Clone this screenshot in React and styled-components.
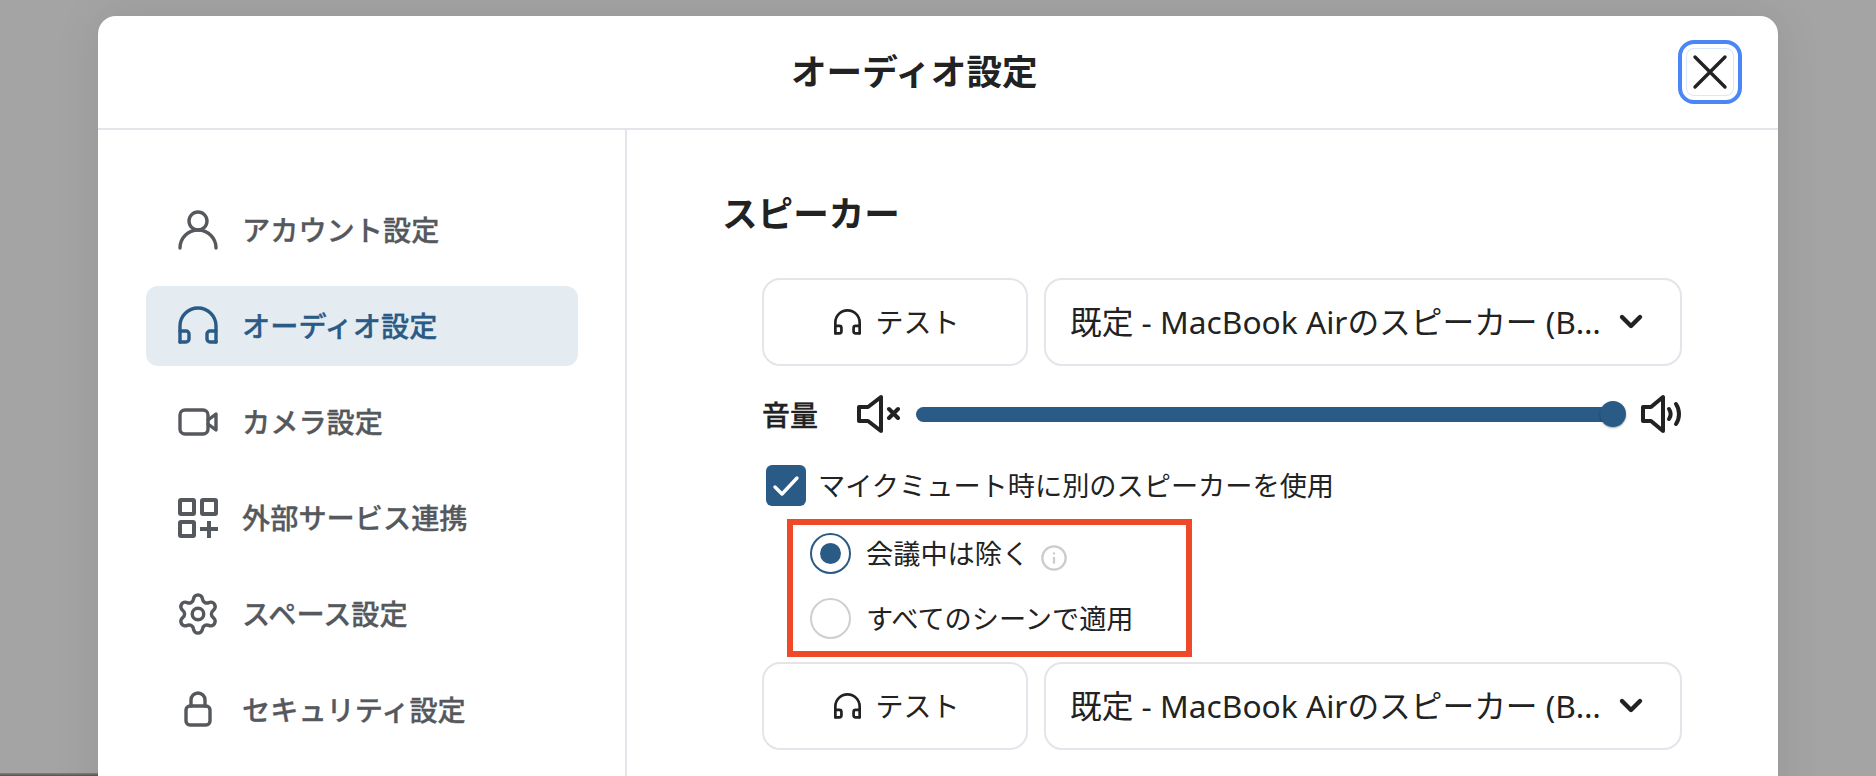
import React from 'react';
import styled, { createGlobalStyle } from 'styled-components';
import { Settings, Info } from 'lucide-react';

const Global = createGlobalStyle`
  html, body { margin: 0; padding: 0; height: 100%; overflow: hidden; }
  body { font-family: "Noto Sans", "Noto Sans CJK JP", sans-serif; color: #222; }
  * { box-sizing: border-box; }
`;

const Backdrop = styled.div`
  position: relative;
  width: 1876px; height: 776px; overflow: hidden;
  background: #a4a4a4;
  padding: 16px 98px 0;
  &::after {
    content: ''; position: absolute; left: 0; bottom: 0; width: 98px; height: 3px;
    background: linear-gradient(to bottom, rgba(0,0,0,.2), rgba(0,0,0,.5));
  }
`;
const Modal = styled.div`
  width: 1680px; height: 800px;
  background: #fff; border-radius: 18px 18px 0 0;
  box-shadow: 0 0 48px rgba(0,0,0,.09);
`;
const Header = styled.header`
  height: 114px; border-bottom: 2px solid #e6e4ea;
  display: flex; align-items: center; justify-content: space-between;
  padding: 0 36px 0 693px;
`;
const Title = styled.h1`
  margin: -2px 0 0; font-size: 35.600px; line-height: 48px; font-weight: 700; color: #222; white-space: nowrap;
`;
const CloseButton = styled.button`
  width: 64px; height: 64px; padding: 0; background: #fff;
  border: 4px solid #4a86f7; border-radius: 16px;
  box-shadow: inset 0 0 0 4px #fff, inset 0 0 0 5px #dbe7fd;
  display: flex; align-items: center; justify-content: center; color: #222;
`;
const Body = styled.div` display: flex; height: 686px; `;
const Sidebar = styled.nav`
  width: 529px; flex: none; border-right: 2px solid #e6e4ea;
  padding: 60px 47px 0 48px;
  display: flex; flex-direction: column; gap: 16px;
`;
const NavItem = styled.div`
  height: 80px; border-radius: 12px; padding-left: 32px;
  display: flex; align-items: center; gap: 24px;
  font-size: 28.200px; font-weight: 500; white-space: nowrap;
  color: ${p => p.$active ? '#2a5a86' : '#55585c'};
  background: ${p => p.$active ? '#e4ebf1' : 'transparent'};
  -webkit-text-stroke: .3px currentColor;
`;
const IconSlot = styled.span`
  width: 40px; height: 40px; flex: none; display: flex; align-items: center; justify-content: center;
  svg { flex: none; }
`;
const NavLabel = styled.span` padding-bottom: 4px; `;
const Main = styled.main` flex: 1; min-width: 0; padding: 59px 96px 0 95px; `;
const Heading = styled.h2`
  margin: 0 0 41px; font-size: 35.600px; line-height: 48px; font-weight: 700; color: #222;
`;
const Section = styled.div` padding-left: 40px; `;
const DeviceRow = styled.div` display: flex; gap: 16px; height: 88px; `;
const TestButton = styled.button`
  width: 266px; flex: none; height: 88px; background: #fff;
  border: 2px solid #e6e3ea; border-radius: 18px; padding: 0 0 0 4px;
  display: flex; align-items: center; justify-content: center; gap: 14px;
  font: 400 28px "Noto Sans", "Noto Sans CJK JP", sans-serif; color: #222;
`;
const TestLabel = styled.span` padding-bottom: 2px; `;
const Select = styled.div`
  flex: 1; min-width: 0; height: 88px; border: 2px solid #e6e3ea; border-radius: 18px;
  display: flex; align-items: center; gap: 8px; padding: 0 35px 0 24px;
  font-size: 31.700px; color: #222;
`;
const SelectText = styled.span`
  flex: 1; min-width: 0; overflow: hidden; text-overflow: ellipsis; white-space: nowrap; padding-bottom: 4px;
`;
const VolumeRow = styled.div`
  display: flex; align-items: center; height: 48px; margin-top: 24px;
`;
const VolumeLabel = styled.span`
  width: 94px; flex: none; font-size: 28px; font-weight: 500; color: #222; -webkit-text-stroke: .3px currentColor;
`;
const Track = styled.div`
  position: relative; width: 708px; height: 15px; margin: 0 16px; flex: none;
  background: #2a5a86; border-radius: 8px;
`;
const Thumb = styled.div`
  position: absolute; right: -2px; top: 50%; width: 26px; height: 26px; margin-top: -13px;
  border-radius: 50%; background: #2a5a86; box-shadow: 0 1px 2px rgba(0,0,0,.35);
`;
const CheckRow = styled.label`
  display: flex; align-items: center; gap: 12px; margin: 27px 0 0 4px; height: 41px;
  font-size: 27.200px; color: #222; white-space: nowrap;
`;
const CheckBox = styled.span`
  width: 40px; height: 41px; flex: none; border-radius: 6px; background: #2a5a86;
  display: flex; align-items: center; justify-content: center;
`;
const CheckLabel = styled.span` padding-bottom: 4px; `;
const RadioGroup = styled.div`
  position: relative; margin: 27px 0 24px 48px; display: flex; flex-direction: column; gap: 25px;
`;
const Annotation = styled.div`
  position: absolute; left: -23px; top: -14px; width: 405px; height: 138px;
  border: 6px solid #ee4a2a; pointer-events: none;
`;
const RadioRow = styled.label`
  display: flex; align-items: center; gap: 15px; height: 40px; font-size: 27.200px; color: #222; white-space: nowrap;
`;
const RadioLabel = styled.span` padding-bottom: 2px; `;
const Radio = styled.span`
  width: 41px; height: 41px; flex: none; border-radius: 50%; background: #fff;
  border: 2px solid ${p => p.$on ? '#2a5a86' : '#cfcfcf'};
  display: flex; align-items: center; justify-content: center;
  &::after { content: ''; width: 21px; height: 21px; border-radius: 50%; background: ${p => p.$on ? '#2a5a86' : 'transparent'}; }
`;
const InfoMark = styled.span` display: inline-flex; margin: 9px 0 0 -4px; color: #cccccc; `;

const sw = { fill: 'none', stroke: 'currentColor', strokeLinecap: 'round', strokeLinejoin: 'round' };

const Person = () => (
  <svg width="40" height="40" viewBox="0 0 40 40" {...sw} strokeWidth="3.400">
    <circle cx="20" cy="11" r="9" />
    <path d="M2 38c0-10 8-18 18-18s18 8 18 18" />
  </svg>
);
const Headphones = ({ size = 40, w = 3.400 }) => (
  <svg width={size} height={size} viewBox="0 0 40 40" {...sw} strokeWidth={w}>
    <path d="M2 36V20a18 18 0 0 1 36 0v16" />
    <path d="M2 25h6a3 3 0 0 1 3 3v5a3 3 0 0 1-3 3H2" />
    <path d="M38 25h-6a3 3 0 0 0-3 3v5a3 3 0 0 0 3 3h6" />
  </svg>
);
const Camera = () => (
  <svg width="40" height="40" viewBox="0 0 40 40" {...sw} strokeWidth="3.400">
    <rect x="2" y="8" width="28" height="24" rx="5" />
    <path d="M30 18l8-6v16l-8-6" />
  </svg>
);
const Apps = () => (
  <svg width="40" height="40" viewBox="0 0 40 40" {...sw} strokeWidth="4" strokeLinecap="butt">
    <rect x="2" y="2" width="14" height="14" rx="1" />
    <rect x="24" y="2" width="14" height="14" rx="1" />
    <rect x="2" y="24" width="14" height="14" rx="1" />
    <path d="M31 23v17M22 31h18" />
  </svg>
);
const Lock = () => (
  <svg width="40" height="40" viewBox="0 0 40 40" {...sw} strokeWidth="3.400">
    <rect x="8" y="16" width="24" height="19" rx="4" />
    <path d="M13 16v-6a7 7 0 0 1 14 0v6" />
  </svg>
);
const Mute = () => (
  <svg width="44" height="40" viewBox="0 0 44 40" {...sw} strokeWidth="4">
    <path d="M3 13h9L25 3v34L12 27H3z" />
    <path d="M33 15l9 9M42 15l-9 9" />
  </svg>
);
const Speaker = () => (
  <svg width="42" height="40" viewBox="0 0 42 40" {...sw} strokeWidth="4">
    <path d="M3 13h8L23 3v34L11 27H3z" />
    <path d="M29 15c2 3 2 7 0 10M36 10c4 6 4 14 0 20" />
  </svg>
);
const Chevron = () => (
  <svg width="28" height="20" viewBox="0 0 28 20" {...sw} strokeWidth="4.400" style={{ flex: 'none' }}>
    <path d="M5 5l9 9 9-9" />
  </svg>
);
const CloseX = () => (
  <svg width="36" height="36" viewBox="0 0 36 36" {...sw} strokeWidth="3.400">
    <path d="M3 3l30 30M33 3L3 33" />
  </svg>
);
const Tick = () => (
  <svg width="28" height="24" viewBox="0 0 28 24" fill="none" stroke="#fff" strokeWidth="3.400" strokeLinecap="round" strokeLinejoin="round">
    <path d="M3 13l7 7L25 4" />
  </svg>
);

const NAV = [
  ['アカウント設定', <Person />],
  ['オーディオ設定', <Headphones />],
  ['カメラ設定', <Camera />],
  ['外部サービス連携', <Apps />],
  ['スペース設定', <Settings size={46} strokeWidth={1.8} />],
  ['セキュリティ設定', <Lock />],
];

const Device = () => (
  <DeviceRow>
    <TestButton><Headphones size={27} w={4} /><TestLabel>テスト</TestLabel></TestButton>
    <Select>
      <SelectText>既定 - MacBook Airのスピーカー (Built-in)</SelectText>
      <Chevron />
    </Select>
  </DeviceRow>
);

export default function App() {
  return (
    <>
      <Global />
      <Backdrop>
        <Modal>
          <Header>
            <Title>オーディオ設定</Title>
            <CloseButton aria-label="閉じる"><CloseX /></CloseButton>
          </Header>
          <Body>
            <Sidebar>
              {NAV.map(([label, icon], i) => (
                <NavItem key={label} $active={i === 1}><IconSlot>{icon}</IconSlot><NavLabel>{label}</NavLabel></NavItem>
              ))}
            </Sidebar>
            <Main>
              <Heading>スピーカー</Heading>
              <Section>
                <Device />
                <VolumeRow>
                  <VolumeLabel>音量</VolumeLabel>
                  <Mute />
                  <Track><Thumb /></Track>
                  <Speaker />
                </VolumeRow>
                <CheckRow><CheckBox><Tick /></CheckBox><CheckLabel>マイクミュート時に別のスピーカーを使用</CheckLabel></CheckRow>
                <RadioGroup>
                  <RadioRow><Radio $on /><RadioLabel>会議中は除く</RadioLabel><InfoMark><Info size={28} strokeWidth={2} /></InfoMark></RadioRow>
                  <RadioRow><Radio /><RadioLabel>すべてのシーンで適用</RadioLabel></RadioRow>
                  <Annotation />
                </RadioGroup>
                <Device />
              </Section>
            </Main>
          </Body>
        </Modal>
      </Backdrop>
    </>
  );
}
